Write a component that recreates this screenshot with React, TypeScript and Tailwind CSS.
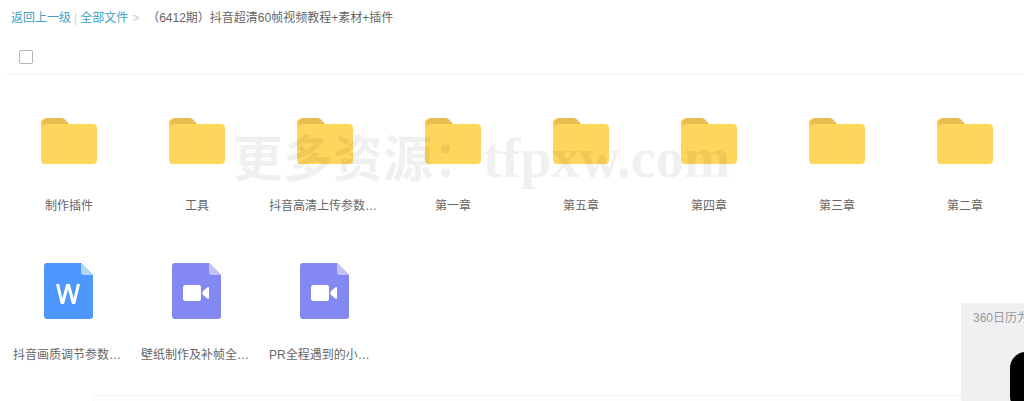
const folders = ["制作插件", "工具", "抖音高清上传参数设置", "第一章", "第五章", "第四章", "第三章", "第二章"];

const files = [
  { name: "抖音画质调节参数设置文档", kind: "word" },
  { name: "壁纸制作及补帧全流程演示", kind: "video" },
  { name: "PR全程遇到的小问题", kind: "video" },
];

function FolderIcon() {
  return (
    <svg width="56" height="46" viewBox="0 0 56 46" aria-hidden="true">
      <path d="M0 6a6 6 0 0 1 6-6h14c2 0 3.500.7 4.500 2L28 6v6H0z" fill="#e8bd50" />
      <path d="M0 10a4 4 0 0 1 4-4h48a4 4 0 0 1 4 4v32a4 4 0 0 1-4 4H4a4 4 0 0 1-4-4z" fill="#ffd55c" />
    </svg>
  );
}

function FileIcon({ kind }: { kind: string }) {
  const body = kind === "word" ? "#4d97ff" : "#8488f2";
  const fold = kind === "word" ? "#b5d3fb" : "#bfc1f8";
  return (
    <svg width="49" height="56" viewBox="0 0 49 56" aria-hidden="true">
      <path d="M3 0h34l12 12v41a3 3 0 0 1-3 3H3a3 3 0 0 1-3-3V3a3 3 0 0 1 3-3z" fill={body} />
      <path d="M37 0l12 12H40a3 3 0 0 1-3-3z" fill={fold} />
      {kind === "word" ? (
        <path d="M12 21h3.200l3.100 14.500L22.200 21h3.600l3.900 14.500L32.800 21H36l-4.800 20h-3.200L24 26.500 20 41h-3.200z" fill="#fff" />
      ) : (
        <>
          <rect x="11" y="22" width="18" height="16" rx="2.500" fill="#fff" />
          <path d="M30.500 28.500l5-4.200c.7-.6 1.500-.2 1.500.7v10c0 .9-.8 1.300-1.500.7l-5-4.200z" fill="#fff" />
        </>
      )}
    </svg>
  );
}

export default function App() {
  return (
    <div className="relative h-[401px] w-[1024px] overflow-hidden bg-white font-['Liberation_Sans','Noto_Sans_CJK_SC',sans-serif] text-xs text-[#666]">
      <div className="flex h-[35px] items-center pl-[11px]">
        <a className="text-[#3f9fc6]">返回上一级</a>
        <span className="mx-[3px] text-[#c5d8e0]">|</span>
        <a className="text-[#3f9fc6]">全部文件</a>
        <span className="ml-[4px] mr-[8px] text-[#ccc]">&gt;</span>
        <span>（6412期）抖音超清60帧视频教程+素材+插件</span>
      </div>
      <div className="ml-[5px] flex h-[40px] items-start border-b border-[#f2f2f2] pl-[14px] pt-[15px]">
        <div className="size-[14px] rounded-[2px] border border-[#b5b5b5] bg-white" />
      </div>

      <div className="ml-[5px] grid grid-cols-[repeat(8,128px)] pt-[43px]">
        {folders.map((name) => (
          <div key={name} className="flex h-[145px] flex-col items-center">
            <div className="flex h-[46px] w-full justify-center">
              <FolderIcon />
            </div>
            <div className="mt-[34px] w-[112px] truncate text-center leading-[16px]">{name}</div>
          </div>
        ))}
        {files.map((f) => (
          <div key={f.name} className="flex h-[120px] flex-col items-center">
            <div className="flex h-[56px] w-full justify-center pr-[2px]">
              <FileIcon kind={f.kind} />
            </div>
            <div className="mt-[28px] w-[112px] truncate pr-[2px] text-center leading-[16px]">{f.name}</div>
          </div>
        ))}
      </div>

      <div className="absolute left-[93px] top-[395px] h-[6px] w-[868px] border-l border-t border-[#f0f2f4] bg-[#fdfeff]" />

      <div className="pointer-events-none absolute left-[233px] top-[128px] flex items-baseline whitespace-nowrap font-['Liberation_Serif','Noto_Sans_CJK_SC',serif] text-[50px] font-bold leading-[60px] text-black/[0.06]">
        更多资源：<span className="text-[56px]">tfpxw.com</span>
      </div>

      <div className="absolute left-[961px] top-[303px] h-[98px] w-[63px] overflow-hidden bg-[#f0f0f3] pl-3 pt-[7px] text-[#999]">
        <div className="whitespace-nowrap leading-[16px]">360日历为您推荐</div>
        <div className="mt-[26px] ml-[37px] h-[60px] w-[60px] rounded-[16px] bg-black" />
      </div>
    </div>
  );
}
